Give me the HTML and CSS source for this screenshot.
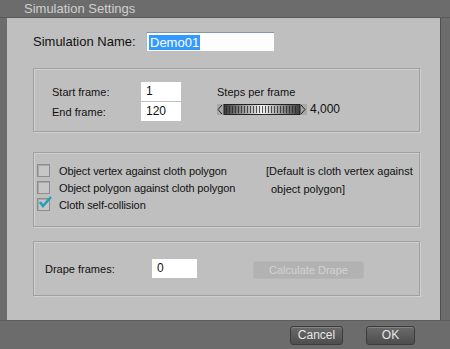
FILE: index.html
```html
<!DOCTYPE html>
<html lang="en">
<head>
    <meta charset="UTF-8">
    <title>Simulation Settings</title>
    <link rel="stylesheet" href="styles.css">
</head>
<body>
    <div class="window">
        <div class="title-bar">Simulation Settings</div>

        <div class="panel">
            <!-- Name row -->
            <div class="name-row">
                <span class="name-label">Simulation Name:</span>
                <div class="name-input"><span class="selected">Demo01</span></div>
            </div>

            <!-- Frames group -->
            <div class="group frames-group">
                <div class="frame-fields">
                    <div class="field-row">
                        <span class="field-label">Start frame:</span>
                        <div class="text-box">1</div>
                    </div>
                    <div class="field-row">
                        <span class="field-label">End frame:</span>
                        <div class="text-box">120</div>
                    </div>
                </div>
                <div class="steps">
                    <div class="steps-label">Steps per frame</div>
                    <div class="steps-row">
                        <svg class="dial" width="90" height="13" viewBox="0 0 90 13">
                            <defs>
                                <linearGradient id="dialShade" x1="0" x2="1" y1="0" y2="0">
                                    <stop offset="0" stop-color="#3a3a3a"/>
                                    <stop offset="0.5" stop-color="#f2f2f2"/>
                                    <stop offset="1" stop-color="#3a3a3a"/>
                                </linearGradient>
                                <pattern id="ticks" width="3" height="13" patternUnits="userSpaceOnUse">
                                    <rect x="0" y="0" width="1" height="13" fill="#222" opacity="0.75"/>
                                </pattern>
                            </defs>
                            <rect x="0" y="1" width="90" height="11" fill="#a8a8a8"/>
                            <path d="M5 2 L1 6.5 L5 11" fill="none" stroke="#222" stroke-width="1"/>
                            <path d="M84 2 L88 6.5 L84 11" fill="none" stroke="#222" stroke-width="1"/>
                            <rect x="7" y="1.5" width="76" height="10" fill="url(#dialShade)" stroke="#222" stroke-width="1"/>
                            <rect x="9" y="3" width="72" height="7" fill="url(#ticks)"/>
                        </svg>
                        <span class="steps-value">4,000</span>
                    </div>
                </div>
            </div>

            <!-- Collision group -->
            <div class="group collision-group">
                <div class="checks">
                    <label class="check-row"><span class="check"></span>Object vertex against cloth polygon</label>
                    <label class="check-row"><span class="check"></span>Object polygon against cloth polygon</label>
                    <label class="check-row"><span class="check checked">
                        <svg width="14" height="12" viewBox="0 0 14 12"><path d="M2 6 L5 10 L13 1" fill="none" stroke="#1fa4b4" stroke-width="2.6"/></svg>
                    </span>Cloth self-collision</label>
                </div>
                <div class="note">
                    <div>[Default is cloth vertex against</div>
                    <div class="note-indent">object polygon]</div>
                </div>
            </div>

            <!-- Drape group -->
            <div class="group drape-group">
                <span class="field-label drape-label">Drape frames:</span>
                <div class="text-box drape-box">0</div>
                <button class="drape-button" disabled>Calculate Drape</button>
            </div>
        </div>

        <div class="footer">
            <button class="dark-button cancel">Cancel</button>
            <button class="dark-button ok">OK</button>
        </div>
    </div>
</body>
</html>
```

FILE: styles.css
```css
body {
    margin: 0;
    padding: 0;
    font-family: "Liberation Sans", Arial, sans-serif;
    background-color: #6c6c6c;
}
.window {
    width: 450px;
    height: 349px;
    background-color: #6c6c6c;
    display: flex;
    flex-direction: column;
}
.title-bar {
    height: 17px;
    line-height: 17px;
    padding-left: 24px;
    font-size: 13px;
    color: #cfcfcf;
    border-bottom: 1px solid #5a5a5a;
}
.panel {
    margin-left: 7px;
    width: 434px;
    height: 302px;
    background-color: #bfbfbf;
    border-right: 1px solid #4e4e4e;
    box-sizing: border-box;
    padding: 14px 21px 0 26px;
}
.name-row {
    display: flex;
    align-items: center;
    height: 19px;
}
.name-label {
    font-size: 13px;
    color: #111;
    width: 113px;
}
.name-input {
    width: 125px;
    height: 18px;
    background: #fdfdfd;
    border-top: 1px solid #7d96b0;
    border-left: 1px solid #a8b8c8;
    display: flex;
    align-items: center;
    padding-left: 2px;
}
.selected {
    background-color: #3399ff;
    color: #fff;
    font-size: 13px;
    line-height: 15px;
    padding: 0 1px;
}
.group {
    border: 1px solid #a0a0a0;
    box-shadow: inset 1px 1px 0 #d0d0d0, 1px 1px 0 #d0d0d0;
    width: 387px;
    box-sizing: border-box;
}
.frames-group {
    margin-top: 17px;
    height: 64px;
    display: flex;
    padding: 13px 0 0 18px;
}
.frame-fields {
    display: flex;
    flex-direction: column;
    gap: 1px;
}
.field-row {
    display: flex;
    align-items: center;
}
.field-label {
    font-size: 11px;
    color: #111;
    width: 89px;
}
.text-box {
    width: 40px;
    height: 19px;
    background: #fff;
    font-size: 12px;
    line-height: 19px;
    padding-left: 5px;
    box-sizing: border-box;
    color: #111;
}
.steps {
    margin-left: 36px;
    padding-top: 4px;
}
.steps-label {
    font-size: 11px;
    color: #111;
}
.steps-row {
    display: flex;
    align-items: center;
    margin-top: 4px;
}
.dial {
    display: block;
}
.steps-value {
    margin-left: 3px;
    font-size: 12px;
    color: #111;
}
.collision-group {
    margin-top: 20px;
    height: 75px;
    display: flex;
    padding: 11px 0 0 3px;
}
.checks {
    flex: 0 0 229px;
    display: flex;
    flex-direction: column;
    gap: 4px;
}
.check-row {
    display: flex;
    align-items: center;
    font-size: 11px;
    color: #111;
    height: 13px;
    white-space: nowrap;
    letter-spacing: -0.1px;
}
.check {
    flex: 0 0 auto;
    width: 11px;
    height: 11px;
    border: 1px solid #8c8c8c;
    box-shadow: inset 1px 1px 0 #a8a8a8;
    background: #c6c6c6;
    margin-right: 9px;
    position: relative;
}
.check.checked svg {
    position: absolute;
    left: 0;
    top: -3px;
}
.note {
    font-size: 11px;
    color: #111;
    line-height: 18px;
    margin-top: -2px;
    white-space: nowrap;
}
.note-indent {
    padding-left: 5px;
}
.drape-group {
    margin-top: 14px;
    height: 55px;
    display: flex;
    align-items: center;
    padding-left: 11px;
}
.drape-label {
    width: 107px;
}
.drape-box {
    width: 45px;
}
.drape-button {
    margin-left: 56px;
    width: 111px;
    height: 18px;
    border: 1px solid #b6b6b6;
    border-radius: 3px;
    background-color: #b2b2b2;
    color: #d2d2d2;
    font-family: "Liberation Sans", Arial, sans-serif;
    font-size: 11px;
    padding: 0;
    margin-top: 2px;
}
.footer {
    flex: 1;
    display: flex;
    align-items: center;
    padding-left: 290px;
    gap: 23px;
    border-top: 1px solid #5c5c5c;
}
.dark-button {
    height: 19px;
    border: 1px solid #3c3c3c;
    border-radius: 3px;
    background: linear-gradient(#6a6a6a, #4e4e4e);
    box-shadow: inset 0 1px 0 #848484;
    color: #e6e6e6;
    font-family: "Liberation Sans", Arial, sans-serif;
    font-size: 12px;
    padding: 0;
}
.cancel {
    width: 53px;
}
.ok {
    width: 49px;
}
```
